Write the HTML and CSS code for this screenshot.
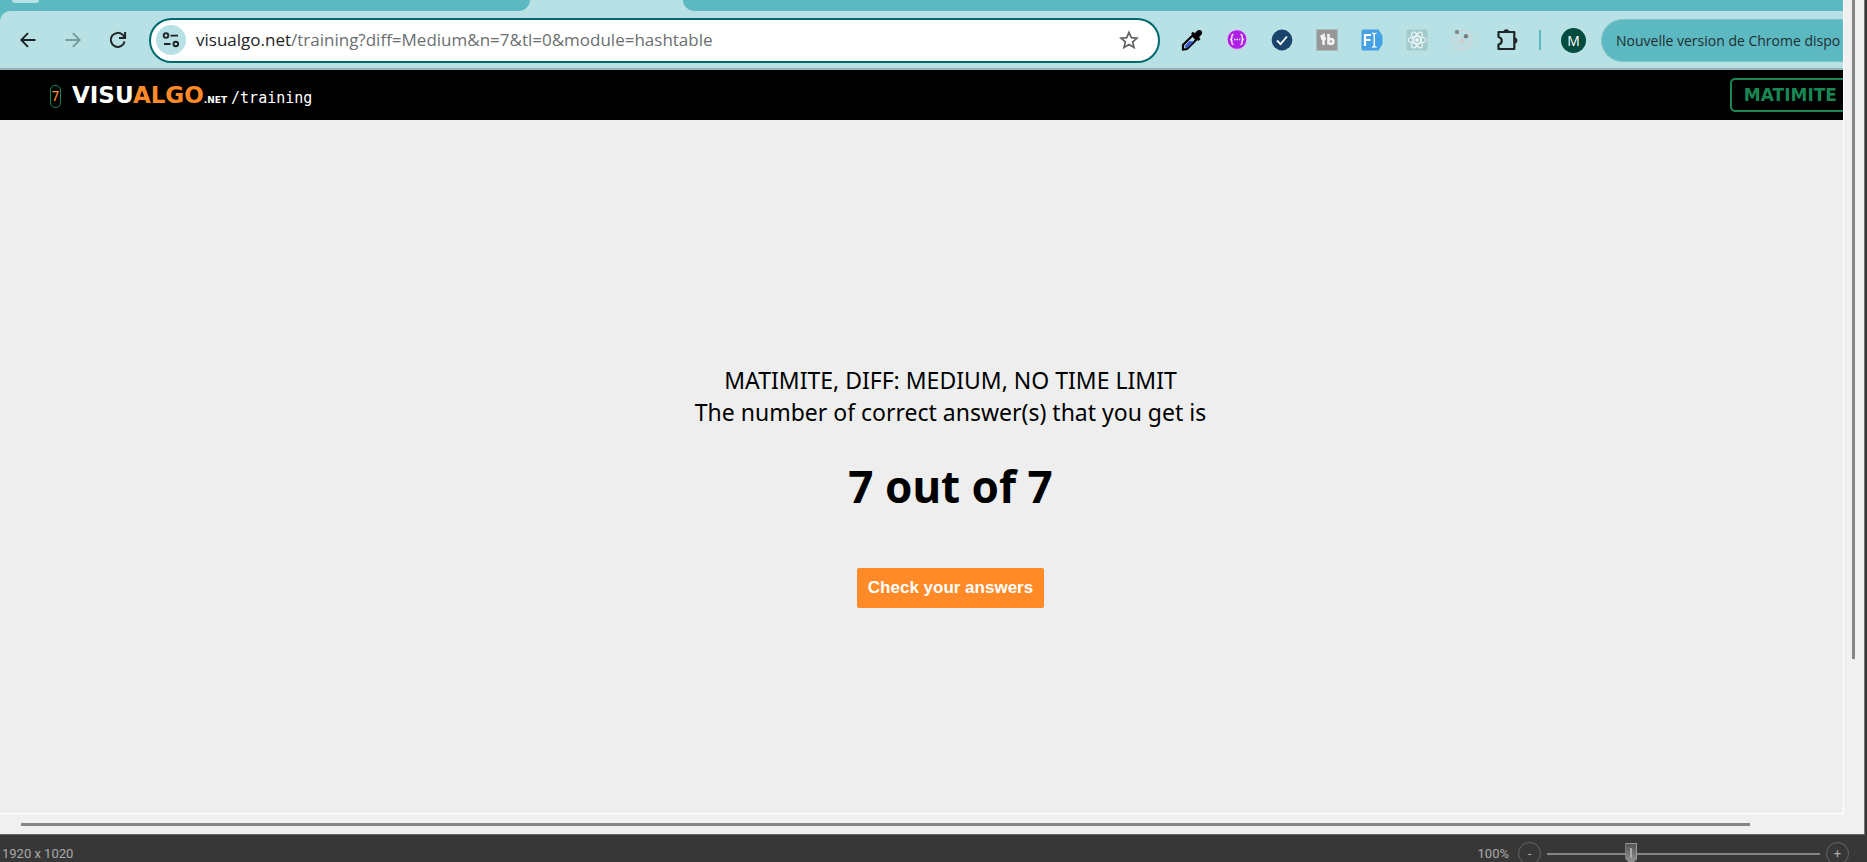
FILE: index.html
```html
<!DOCTYPE html>
<html lang="fr">
<head>
<meta charset="utf-8">
<title>visualgo.net/training</title>
<link rel="stylesheet" href="styles.css">
</head>
<body>
<div class="viewer">
  <div class="workspace">
    <div class="capture">
      <div class="browser">
        <div class="tabstrip">
          <div class="tabs-before"><span class="tab-search"></span></div>
          <div class="tab-active"></div>
          <div class="tabs-after"></div>
        </div>
        <div class="toolbar">
          <div class="nav">
            <button class="tool" aria-label="Retour"><svg width="16" height="16" viewBox="0 0 16 16" fill="none" stroke="#1f2526" stroke-width="1.9"><path d="M15.5 8H1.5M8 1.2L1.3 8L8 14.8"/></svg></button>
            <button class="tool" aria-label="Avancer"><svg width="16" height="16" viewBox="0 0 16 16" fill="none" stroke="#7a999b" stroke-width="1.9"><path d="M.5 8h14M8 1.2L14.7 8L8 14.8"/></svg></button>
            <button class="tool" aria-label="Actualiser"><svg width="18" height="18" viewBox="0 0 18 18" fill="none" stroke="#1f2526" stroke-width="2"><path d="M15.6 10.5A7 7 0 1 1 14 4.2L15.8 6.4M16.1 1v6H10"/></svg></button>
          </div>
          <div class="omnibox">
            <button class="site-info" aria-label="Informations sur le site"><svg width="18" height="16" viewBox="0 0 18 16" fill="none" stroke="#1f2526" stroke-width="1.9"><circle cx="4" cy="3.6" r="2.3"/><path d="M8.5 3.6H16M2 12H8.5"/><circle cx="13.8" cy="12" r="2.3"/></svg></button>
            <div class="url"><span class="host">visualgo.net</span>/training?diff=Medium&amp;n=7&amp;tl=0&amp;module=hashtable</div>
            <button class="star" aria-label="Ajouter aux favoris"><svg width="20" height="20" viewBox="0 0 20 20" fill="none" stroke="#5f6364" stroke-width="1.7"><path d="M10 2.3l2.3 5.3 5.7.5-4.3 3.8 1.3 5.6-5-3-5 3 1.3-5.6L2 8.100l5.700-.5z"/></svg></button>
          </div>
          <div class="extensions">
            <button class="tool" aria-label="Pipette"><svg width="22" height="22" viewBox="0 0 22 22"><path d="M2 20.500v-4.500L11.500 6.500l4 4L6 20z" fill="#b7e1e4" stroke="#050505" stroke-width="2.200"/><path d="M4.200 16.500l4-4.300h5L6.500 18.800H4z" fill="#3556c4"/><path d="M10 4.500l2-1.800 2 1.600C15.500 1.500 17.500.2 19.600 1.300c2.200 1.400 2 4-.1 5.400l-1.500 1.200 1.500 2-2 2z" fill="#050505"/></svg></button>
            <button class="tool" aria-label="Accolades"><svg width="22" height="22" viewBox="0 0 22 22"><circle cx="11" cy="10.500" r="9.800" fill="#b01fe8" stroke="#e6d3f3" stroke-width=".8"/><path d="M7.500 5.500C5.700 5.500 5.900 7 5.900 8.300c0 1.400-.4 2.200-1.700 2.200 1.300 0 1.700.8 1.700 2.200 0 1.300-.2 2.800 1.600 2.800M14.500 5.500c1.800 0 1.600 1.500 1.600 2.800 0 1.400.4 2.200 1.700 2.200-1.300 0-1.700.8-1.700 2.200 0 1.300.2 2.800-1.600 2.800" fill="none" stroke="#fff" stroke-width="1.300"/><path d="M8 10.500h1.500m1 0H12m1 0h1.300" stroke="#fff" stroke-width="1.500"/></svg></button>
            <button class="tool" aria-label="Validation"><svg width="22" height="22" viewBox="0 0 22 22"><circle cx="11" cy="11" r="10.400" fill="#1b446d"/><path d="M6 11.500l3.500 3.600L16 7.500" fill="none" stroke="#fff" stroke-width="1.800"/></svg></button>
            <button class="tool" aria-label="TB"><svg width="22" height="22" viewBox="0 0 22 22"><rect x=".5" y=".5" width="21" height="21" fill="#979797"/><path d="M4.500 8l3-1.800V16M5 9.500h5M12.500 5v10.500M12.500 12.500a2.400 2.400 0 1 1 4.900 0a2.400 2.400 0 1 1-4.900 0" fill="none" stroke="#f4f4f4" stroke-width="2.600"/></svg></button>
            <button class="tool" aria-label="Remplissage"><svg width="22" height="22" viewBox="0 0 22 22"><path d="M2 .5h15.500L21.500 7v8l-4 6.500H2A1.500 1.500 0 0 1 .5 20V2A1.500 1.500 0 0 1 2 .5z" fill="#43a1e4"/><path d="M4 17V6h6M4 11h5.500" fill="none" stroke="#fff" stroke-width="2.200"/><path d="M11 4.200q2.200 0 2.200 1.500v11q0 1.500-2.200 1.500M15.500 4.200q-2.200 0-2.200 1.500v11q0 1.500 2.200 1.500" fill="none" stroke="#fff" stroke-width="1.300"/></svg></button>
            <button class="tool" aria-label="React"><svg width="22" height="22" viewBox="0 0 22 22"><rect x=".5" y=".5" width="21" height="21" rx="1.500" fill="#a2c9cb"/><g fill="none" stroke="#f1f7f7" stroke-width="1.100"><ellipse cx="11" cy="11" rx="9" ry="3.500"/><ellipse cx="11" cy="11" rx="9" ry="3.500" transform="rotate(60 11 11)"/><ellipse cx="11" cy="11" rx="9" ry="3.500" transform="rotate(120 11 11)"/></g><circle cx="11" cy="11" r="1.800" fill="#fff"/></svg></button>
            <button class="tool" aria-label="Radar"><svg width="22" height="22" viewBox="0 0 22 22"><g fill="none" stroke="#d0d5d6" stroke-width="1.400"><path d="M8.500 1.600A9.700 9.700 0 1 1 2 7.500"/><path d="M9.500 5.200A6 6 0 1 0 17 10"/></g><path d="M11 7.500l2.200 3.800a2.300 2.300 0 1 1-4.400 0z" fill="#d5c9c9"/><circle cx="6" cy="3" r="2.200" fill="#858b8b"/><circle cx="15" cy="7.300" r="2.200" fill="#777d7d"/></svg></button>
            <button class="tool" aria-label="Extensions"><svg width="22" height="22" viewBox="0 0 22 22"><path d="M2.500 3h15.800v17H2.500v-4.500c4.300-1 4.300-6.500 0-7.500z" fill="none" stroke="#1f2526" stroke-width="2.200" stroke-linejoin="round"/><path d="M7.500 3a2.800 2.800 0 0 1 5.600 0zM18.500 8.500a2.800 2.800 0 0 1 0 5.800z" fill="#1f2526"/></svg></button>
          </div>
          <span class="divider"></span>
          <button class="avatar">M</button>
          <button class="update">Nouvelle version de Chrome dispo</button>
        </div>
      </div>
      <header class="site-header">
        <a class="lang" href="#">7</a>
        <a class="brand" href="#"><span class="visu">VISU</span><span class="algo">ALGO</span><span class="net">.NET</span></a>
        <a class="section" href="#">/training</a>
        <button class="account">MATIMITE</button>
      </header>
      <main class="result">
        <p class="summary">MATIMITE, DIFF: MEDIUM, NO TIME LIMIT<br>The number of correct answer(s) that you get is</p>
        <h1 class="score">7 out of 7</h1>
        <button class="check">Check your answers</button>
      </main>
    </div>
    <div class="vscroll"><span class="vthumb"></span></div>
    <div class="hscroll"><span class="hthumb"></span></div>
  </div>
  <footer class="statusbar">
    <span class="dimensions">1920 x 1020</span>
    <label class="percent" for="zoom">100%</label>
    <button class="step" aria-label="Zoom arrière">-</button>
    <input class="zoom" id="zoom" type="range" min="0" max="100" value="30">
    <button class="step" aria-label="Zoom avant">+</button>
  </footer>
</div>
</body>
</html>
```
FILE: styles.css
```css
* { box-sizing: border-box; }
body { margin: 0; overflow: hidden; font-family: "Open Sans", sans-serif; }
button { margin: 0; padding: 0; border: 0; background: none; font: inherit; color: inherit; }
a { color: inherit; text-decoration: none; }
svg { display: block; }

.viewer { display: flex; flex-direction: column; height: 100vh; background: #373737; }
.workspace {
  flex: 1; min-height: 0; display: grid;
  grid-template-columns: minmax(0, 1fr) 20px; grid-template-rows: minmax(0, 1fr) 20px;
  margin-right: 2px; background: #f0f0f0;
  border-right: 1px solid #777; border-bottom: 1px solid #666;
}
.capture {
  display: flex; flex-direction: column; overflow: hidden; background: #eee;
  border-right: 1px solid #fff; border-bottom: 1px solid #fff;
}
.vscroll { display: flex; justify-content: center; padding-right: 2px; }
.vthumb { width: 3px; height: 81%; background: #858585; }
.hscroll { grid-column: 1 / -1; display: flex; align-items: center; padding: 0 114px 0 21px; }
.hthumb { flex: 1; height: 3px; background: #858585; }

.browser { background: #5cb8c1; border-bottom: 2px solid #94b5b8; }
.tabstrip { display: flex; height: 11px; background: #b7e1e4; }
.tabs-before { width: 530px; padding-left: 12px; background: #5cb8c1; border-bottom-right-radius: 12px 11px; }
.tab-search { display: block; width: 27px; height: 3px; background: #b7e1e4; border-radius: 0 0 12px 12px; }
.tab-active { width: 153px; }
.tabs-after { flex: 1; background: #5cb8c1; border-bottom-left-radius: 12px 11px; }
.toolbar {
  display: flex; align-items: center; height: 57px; padding: 1px 0 0 5px;
  background: #b7e1e4; border-top-left-radius: 10px;
}
.nav, .extensions { display: flex; }
.tool { width: 45px; height: 40px; display: grid; place-items: center; }
.omnibox {
  flex: 1; min-width: 0; display: flex; align-items: center; height: 45px; margin: 0 9px; padding: 0 19px 0 5px;
  background: #fff; border: 2px solid #00696f; border-radius: 23px;
}
.site-info { flex: none; width: 30px; height: 30px; display: grid; place-items: center; border-radius: 50%; background: #b7e1e4; }
.url { flex: 1; margin-left: 10px; font-size: 17px; line-height: 24px; white-space: nowrap; color: #6b6f70; }
.host { color: #1f2526; }
.divider { width: 2px; height: 20px; margin: 0 20px 0 10px; background: #5cb8c1; }
.avatar { flex: none; width: 25px; height: 25px; border-radius: 50%; background: #004d40; color: #fff; font-size: 14px; line-height: 25px; }
.update {
  flex: none; width: 242px; height: 43px; margin-left: 15px; padding-left: 14px; overflow: hidden;
  text-align: left; white-space: nowrap; font-size: 14px; color: #1f2f31;
  background: #5cb8c1; border: 1px solid #82c6cd; border-right: 0; border-radius: 22px 0 0 22px;
}

.site-header { display: flex; align-items: center; height: 50px; padding-left: 50px; background: #000; color: #fff; font-family: "DejaVu Sans", sans-serif; }
.lang {
  width: 11px; height: 23px; margin-top: 2px; border: 1px solid #198754; border-radius: 5px;
  font: 14px/21px "DejaVu Sans Mono", monospace; color: #ff8a27;
  display: flex; justify-content: center;
}
.brand { margin: 4px 0 0 11px; font-size: 23px; line-height: 30px; font-weight: bold; }
.algo { color: #ff8a27; }
.net { font-size: 9px; }
.section { margin: 6px 0 0 4px; font: 15px/20px "DejaVu Sans Mono", monospace; }
.account {
  height: 34px; margin: 0 -8px 0 auto; padding: 0 12px; border: 2px solid #198754; border-radius: 5px;
  font-size: 17px; font-weight: bold; color: #198754;
}

.result { flex: 1; display: flex; flex-direction: column; align-items: center; padding: 244px 0 0 58px; font-family: "Noto Sans", sans-serif; color: #000; text-align: center; }
.summary { margin: 0; font-size: 23px; line-height: 32px; }
.score { margin: 26px 0 0; font-size: 44px; line-height: 64px; font-weight: bold; }
.check {
  height: 40px; margin-top: 50px; padding: 0 11px; border-radius: 2px; background: #ff8a27; color: #fff;
  font: bold 17px/40px "Liberation Sans", sans-serif;
}

.statusbar {
  display: flex; align-items: flex-start; height: 27px; padding: 7px 18px 0 2px; overflow: hidden;
  font-family: Roboto, sans-serif; font-size: 13px; line-height: 23px; color: #aaa;
}
.percent { margin: 0 9px 0 auto; }
.step { width: 23px; height: 23px; border: 1px solid #666; border-radius: 50%; line-height: 21px; text-align: center; }
.zoom { appearance: none; width: 273px; height: 23px; margin: 0 6px; background: linear-gradient(#858585, #858585) center / 100% 2px no-repeat; }
.zoom::-webkit-slider-thumb {
  appearance: none; width: 12px; height: 22px;
  background: linear-gradient(90deg, transparent 5px, #aaa 5px, #aaa 7px, transparent 7px) center 4px / 12px 10px no-repeat, linear-gradient(#555, #999);
  border: 1px solid #999; clip-path: polygon(0 0, 100% 0, 100% 75%, 50% 100%, 0 75%);
}
```
